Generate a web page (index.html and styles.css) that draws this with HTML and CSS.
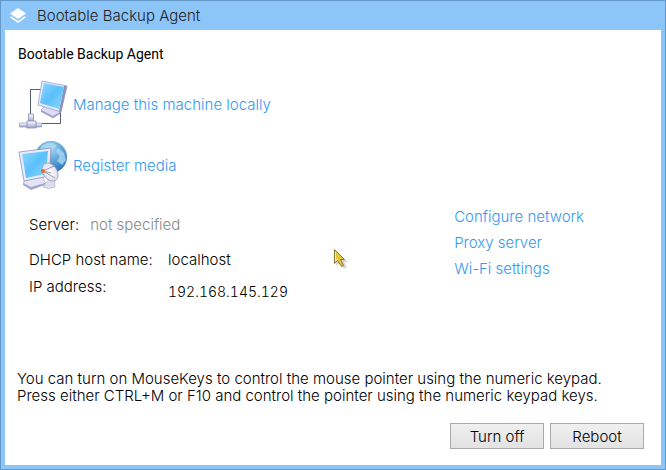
FILE: index.html
```html
<!DOCTYPE html>
<html lang="en">
<head>
<meta charset="utf-8">
<title>Bootable Backup Agent</title>
<link rel="stylesheet" href="styles.css">
</head>
<body>
<div class="window">
  <header class="titlebar">
    <svg class="logo" viewBox="0 0 18 18" aria-hidden="true">
      <path d="M9 1 17 6.500 9 12 1 6.500Z" fill="#fff"/>
      <path d="M2.200 9.200 1 10.200 9 16 17 10.200 15.800 9.200 9 14Z" fill="#fff"/>
    </svg>
    <span class="title">Bootable Backup Agent</span>
  </header>
  <main class="content">
    <h1 class="heading">Bootable Backup Agent</h1>
    <nav class="actions">
      <a class="action" href="#manage">
        <svg class="action-icon" viewBox="0 0 52 50" aria-hidden="true">
          <defs>
            <linearGradient id="screen" x1="0" y1="0" x2="1" y2="1"><stop offset="0" stop-color="#8ad8ff"/><stop offset=".5" stop-color="#5cc0fb"/><stop offset="1" stop-color="#8adcff"/></linearGradient>
            <linearGradient id="metal" x1="0" y1="0" x2="0" y2="1"><stop offset="0" stop-color="#fff"/><stop offset="1" stop-color="#9ca2cc"/></linearGradient>
          </defs>
          <path d="M24 10.500H13.500V35M43.500 32V44.500H25" fill="none" stroke="#555b72"/>
          <path d="m28 27-4 4 12 8 7-5 1-4Z" fill="#dcddf2" stroke="#a4a8cf" stroke-width=".7"/>
          <path d="m24 31 12 6 7-4v2l-7 4-12-6Z" fill="#9ca0cd"/>
          <path d="m25 2 25 5-6 26-23-7Z" fill="#e6e8fb" stroke="#9ca1cd" stroke-width=".8"/>
          <path d="m50 7-6 26-2-1 5-25Z" fill="#8b90bc"/>
          <path d="m27 4 20 4-5 22-19-6Z" fill="url(#screen)"/>
          <path d="M11.500 35h5v8h-5Z" fill="url(#metal)" stroke="#7a7fa6" stroke-width=".7"/>
          <path d="M2.500 44h22v4h-22Z" fill="url(#metal)" stroke="#9298bd" stroke-width=".7"/>
          <path d="M10 42h9v7h-9Z" fill="url(#metal)" stroke="#7a7fa6" stroke-width=".7"/>
        </svg>
        <span>Manage this machine locally</span>
      </a>
      <a class="action" href="#register">
        <svg class="action-icon" viewBox="0 0 52 50" aria-hidden="true">
          <defs>
            <radialGradient id="globe" cx=".5" cy=".25" r=".8"><stop offset="0" stop-color="#9ed8f6"/><stop offset=".5" stop-color="#5a9fd6"/><stop offset="1" stop-color="#2468b0"/></radialGradient>
            <radialGradient id="dish"><stop offset="0" stop-color="#fff"/><stop offset="1" stop-color="#dcdeef"/></radialGradient>
          </defs>
          <circle cx="34" cy="17" r="16" fill="url(#globe)"/>
          <path d="M24 6q7-5 13-3l3 3-5 4-5-1-7 2ZM41 8l6 5 2 7-4 5-5-4 3-5-4-4Z" fill="#b5e0f5" opacity=".7"/>
          <path d="m11 37-5 6 8 6 15-5-4-8Z" fill="#e3e4f4" stroke="#a4a8cf" stroke-width=".7"/>
          <path d="m6 43 8 4 14-4v2l-14 5-8-5Z" fill="#a3a7d0"/>
          <path d="m2 12 32-4-2 28-25 5Z" fill="#eceefd" stroke="#8990bd" stroke-width=".8"/>
          <path d="m5 14 26-3-2 23-20 4Z" fill="url(#screen)"/>
          <path d="m32 39-6 8q6 3 12 0l-1-9Z" fill="#dcdded" stroke="#a9acc6" stroke-width=".6"/>
          <ellipse cx="33" cy="32" rx="7" ry="10" transform="rotate(-35 33 32)" fill="url(#dish)" stroke="#9da0b8" stroke-width=".8"/>
          <path d="m26 31 11-5M26 31l12 7M26 31l8 2" fill="none" stroke="#85879a" stroke-width=".8"/>
          <circle cx="26" cy="31" r="2" fill="#f0672f"/>
        </svg>
        <span>Register media</span>
      </a>
    </nav>
    <div class="details">
      <dl class="info">
        <div class="server"><dt>Server:</dt><dd class="muted">not specified</dd></div>
        <div class="host"><dt>DHCP host name:</dt><dd>localhost</dd></div>
        <div class="host address"><dt>IP address:</dt><dd class="ip">192.168.145.129</dd></div>
      </dl>
      <nav class="settings">
        <a href="#network">Configure network</a>
        <a href="#proxy">Proxy server</a>
        <a href="#wifi">Wi-Fi settings</a>
      </nav>
    </div>
    <footer class="footer">
      <p class="hint">You can turn on MouseKeys to control the mouse pointer using the numeric keypad.<br>Press either CTRL+M or F10 and control the pointer using the numeric keypad keys.</p>
      <div class="buttons">
        <button type="button">Turn off</button>
        <button type="button">Reboot</button>
      </div>
    </footer>
  </main>
  <svg class="pointer" viewBox="0 0 16 24" aria-hidden="true">
    <path d="M3 3v15l4-3 4 6 3-2-3-5h4Z" fill="#777" opacity=".3"/>
    <path d="M1.500 1.500v14l3-3 4 6 2-1-3-6h4Z" fill="#e6c63c" stroke="#8a7838"/>
    <path d="M2.500 4v9l2-2" fill="none" stroke="#fff2a0"/>
  </svg>
</div>
</body>
</html>
```
FILE: styles.css
```css
* { box-sizing: border-box; }
body {
  margin: 0;
  font: 300 15px/17px Inter, "Liberation Sans", sans-serif;
  color: #000;
}
.window {
  position: relative;
  display: flex;
  flex-direction: column;
  min-height: 100vh;
  padding: 0 4px 4px;
  background: #8cc5f8;
  border: 1px solid #6398c9;
}
.titlebar {
  display: flex;
  align-items: center;
  gap: 10px;
  height: 29px;
  padding-left: 4px;
  color: #222;
}
.logo { width: 18px; height: 18px; }
.content {
  flex: 1;
  display: flex;
  flex-direction: column;
  padding: 16px 17px 16px 12px;
  background: #fff;
}
.heading {
  margin: 0 0 16px 1px;
  font: 400 14px/17px Roboto, "Liberation Sans", sans-serif;
}
a { color: #3399f3; text-decoration: none; }
.actions { display: flex; flex-direction: column; gap: 11px; }
.action { display: flex; align-items: center; gap: 4px; align-self: flex-start; }
.action-icon { width: 52px; height: 50px; }
.details {
  display: flex;
  justify-content: space-between;
  margin-top: 18px;
  padding: 0 60px 0 12px;
}
.info { margin: 0; padding-top: 8px; }
.info dd { margin: 0; }
.server { display: flex; gap: 11px; margin-bottom: 18px; }
.muted { color: #888; }
.host { display: grid; grid-template-columns: 139px auto; }
.address { margin-top: 10px; }
.ip { padding-top: 5px; font-size: 14px; font-variant-numeric: tabular-nums; }
.settings { display: flex; flex-direction: column; gap: 9px; }
.footer { margin-top: auto; }
.hint { margin: 0 0 19px; }
.buttons { display: flex; justify-content: flex-end; gap: 6px; }
button {
  width: 94px;
  height: 26px;
  padding: 0;
  font: inherit;
  color: #000;
  background: linear-gradient(#f0f0f0, #e2e2e2);
  border: 1px solid #aaa;
}
.pointer {
  position: absolute;
  left: 332px;
  top: 247px;
  width: 16px;
  height: 24px;
}
```
